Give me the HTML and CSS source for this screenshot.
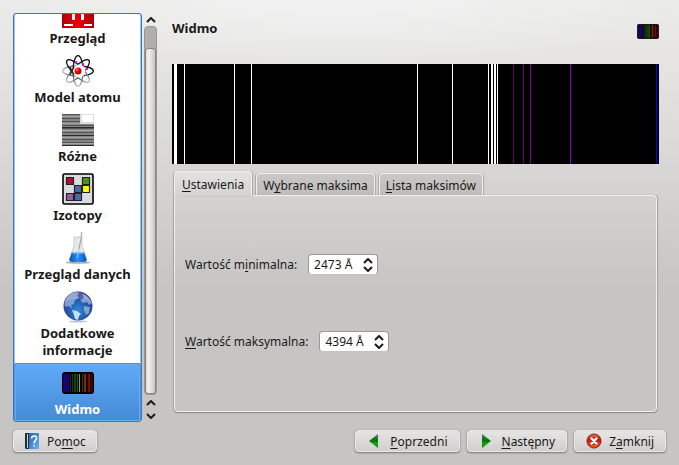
FILE: index.html
```html
<!DOCTYPE html>
<html lang="pl">
<head>
<meta charset="utf-8">
<title>Widmo</title>
<link rel="stylesheet" href="styles.css">
</head>
<body>
<svg class="defs" aria-hidden="true">
  <defs>
    <linearGradient id="red" x1="0" y1="0" x2="1" y2="0"><stop offset="0" stop-color="#a80008"/><stop offset=".45" stop-color="#f00008"/><stop offset="1" stop-color="#a80008"/></linearGradient>
    <radialGradient id="ball" cx=".35" cy=".3" r=".7"><stop offset="0" stop-color="#ff9a9a"/><stop offset=".4" stop-color="#f00"/><stop offset="1" stop-color="#b00000"/></radialGradient>
    <linearGradient id="orbit" x1="0" y1="0" x2="1" y2="0"><stop offset="0" stop-color="#bbb"/><stop offset=".5" stop-color="#333"/><stop offset="1" stop-color="#000"/></linearGradient>
    <linearGradient id="liquid" x1="0" y1="0" x2="1" y2="0"><stop offset="0" stop-color="#0d4fb0"/><stop offset=".5" stop-color="#2f93f5"/><stop offset="1" stop-color="#0b50b8"/></linearGradient>
    <radialGradient id="sea" cx=".5" cy=".65" r=".6"><stop offset="0" stop-color="#2f8ad8"/><stop offset=".6" stop-color="#2458a8"/><stop offset="1" stop-color="#35308c"/></radialGradient>
    <linearGradient id="green" x1="0" y1="0" x2="0" y2="1"><stop offset="0" stop-color="#3c8a48"/><stop offset=".5" stop-color="#087010"/><stop offset=".7" stop-color="#0cae10"/><stop offset="1" stop-color="#0a7a10"/></linearGradient>
    <linearGradient id="book" x1="0" y1="0" x2="1" y2="1"><stop offset="0" stop-color="#2464b4"/><stop offset="1" stop-color="#6db0ee"/></linearGradient>
    <linearGradient id="stop" x1="0" y1="0" x2="0" y2="1"><stop offset="0" stop-color="#d88070"/><stop offset=".4" stop-color="#b81808"/><stop offset="1" stop-color="#f06030"/></linearGradient>
    <symbol id="spectrum-icon" viewBox="0 0 32 22">
      <rect x=".5" y=".5" width="31" height="21" rx="2" fill="#080004" stroke="#000"/>
      <path fill="#1c0078" d="M2 2h5v18H2z"/><path fill="#22004c" d="M1 2h1v18H1z"/><path fill="#06283c" d="M8 2h1v18H8z"/><path fill="#084020" d="M10 2h1v18h-1z"/><path fill="#0c4c08" d="M12 2h2v18h-2z"/><path fill="#1c5c00" d="M15 2h1v18h-1z"/><path fill="#8ca800" d="M17 2h1v18h-1z"/><path fill="#403800" d="M20 2h1v18h-1z"/><path fill="#6c3410" d="M22 2h2v18h-2z"/><path fill="#900000" d="M26 2h2v18h-2z"/><path fill="#400000" d="M29 2h2v18h-2z"/>
    </symbol>
  </defs>
</svg>
<div class="workspace">
  <div class="side">
    <nav class="pages">
      <a class="page" href="#overview">
        <svg class="icon" viewBox="0 0 32 32"><path fill="url(#red)" d="M0 0h32v32H0z"/><path fill="#fff" d="M10 13h3v11h-3zM19 13h3v11h-3zM2 28h9v2H2zM22 28h8v2h-8z"/></svg>
        <span>Przegląd</span></a>
      <a class="page" href="#atom">
        <svg class="icon" viewBox="0 0 32 32"><g fill="none" stroke="url(#orbit)" stroke-width="1.3"><ellipse cx="16" cy="16" rx="15.300" ry="5"/><ellipse cx="16" cy="16" rx="15.300" ry="5" transform="rotate(-45 16 16)"/><ellipse cx="16" cy="16" rx="15.300" ry="5" transform="rotate(-90 16 16)"/><ellipse cx="16" cy="16" rx="15.300" ry="5" transform="rotate(-135 16 16)"/></g><circle cx="17" cy="16" r="6.500" fill="#fff"/><path fill="#f0f" d="M13 6h2v2h-2zM20 8h2v2h-2zM24 13h2v2h-2zM23 20h2v1h-2z"/><circle cx="16" cy="16" r="3.5" fill="url(#ball)"/><path d="M8 12l4 8M8 20l4-8" stroke="#222" stroke-width="1.300"/></svg>
        <span>Model atomu</span></a>
      <a class="page" href="#misc">
        <svg class="icon" viewBox="0 0 32 32" shape-rendering="crispEdges"><path fill="#858585" d="M0 0h32v32H0z"/><path stroke="#555" d="M0 .5h32M0 4.5h32M0 7.5h32M0 11.5h32M0 14.5h32M0 18.5h32M0 25.5h32M0 28.5h32"/><path stroke="#2c2c2c" d="M0 21.5h32M0 31.5h32M0 13.5h32"/><path stroke="#a5a5a5" d="M0 2.5h32M0 9.5h32M0 16.5h32M0 23.5h32M0 29.5h32"/><path fill="#ddd" d="M18 0h14v10H18z"/><path fill="#fff" d="M20 1h11v7H20z"/></svg>
        <span>Różne</span></a>
      <a class="page" href="#isotopes">
        <svg class="icon" viewBox="0 0 32 32"><rect x="1" y="1" width="30" height="30" rx="1.5" fill="#d8dcde" stroke="#000" stroke-width="1.6"/><g stroke="#222" stroke-width="1.2"><path fill="#b80c38" d="M4.500 4.500h7v7h-7z"/><path fill="#4c9414" d="M20.500 4.500h7v7h-7z"/><path fill="#4868b0" d="M12.500 12.500h7v7h-7zM12.500 20.500h7v7h-7z"/><path fill="#ff0" d="M20.500 12.500h7v7h-7z"/><path fill="#a058a0" d="M4.500 20.500h7v7h-7z"/></g></svg>
        <span>Izotopy</span></a>
      <a class="page" href="#data">
        <svg class="icon" viewBox="0 0 32 32"><ellipse cx="16" cy="30.500" rx="12.500" ry="1.300" fill="#777" opacity=".6"/><path fill="#e6e9e8" stroke="#b8bcbc" stroke-width=".7" d="M12 5h8v9l4.500 13c.5 2-1 3-3 3h-11c-2 0-3.500-1-3-3L12 14z"/><path fill="url(#liquid)" d="M10 20h12l2.500 7c.5 2-1 3-3 3h-11c-2 0-3.500-1-3-3z"/><path fill="#8cc6fa" d="M10.500 20h11l.5 1.500H10z"/><path stroke="#a8acac" stroke-width="1.300" fill="none" d="M19.500 0v4L17 17"/><path stroke="#93c7fa" fill="none" d="M17 17l-2 9"/></svg>
        <span>Przegląd danych</span></a>
      <a class="page wrapped" href="#more">
        <svg class="icon" viewBox="0 0 32 32"><ellipse cx="16" cy="30.500" rx="9" ry="1" fill="#b8c4dc"/><circle cx="16" cy="15" r="14.500" fill="url(#sea)"/><path fill="#b4d4ee" opacity=".6" d="M4 8c2-4 6-7 10-7l3 1-2 3 2 2-4 2-1 4-3 1 1 3-4-2-3 1c-1-3-.5-6 1-8zM20 3c5 1 8 5 10 9l-3 2-2-3-4 1-3-3 4-2zM22 15l6 1-1 6-3 2-2-5z"/><path fill="#d4ecfc" opacity=".9" d="M10 19l5 1 4 3-2 2-1 4-3-1-1-4z"/><path fill="#fff" opacity=".18" d="M3 11C5 4 10 1 16 1s11 4 13 10c-9-5-17-4-26 0z"/></svg>
        <span>Dodatkowe informacje</span></a>
      <a class="page current" href="#spectrum" aria-current="page">
        <svg class="icon"><use href="#spectrum-icon" y="5" width="32" height="22"/></svg>
        <span>Widmo</span></a>
    </nav>
    <div class="scrollbar">
      <button class="step" aria-label="W górę"><svg viewBox="0 0 10 6"><path d="M1 5l4-4 4 4"/></svg></button>
      <div class="track"><div class="thumb"></div></div>
      <button class="step" aria-label="W górę"><svg viewBox="0 0 10 6"><path d="M1 5l4-4 4 4"/></svg></button>
      <button class="step" aria-label="W dół"><svg viewBox="0 0 10 6"><path d="M1 1l4 4 4-4"/></svg></button>
    </div>
  </div>
  <main class="content">
    <header class="heading"><h1>Widmo</h1><svg class="badge"><use href="#spectrum-icon" width="22" height="15"/></svg></header>
    <svg class="spectrum" viewBox="0 0 487 100" preserveAspectRatio="none" shape-rendering="crispEdges" role="img" aria-label="Widmo">
      <path d="M0 0h487v100H0z"/>
      <path fill="#fff" d="M2 0h3v100H2zM12 0h1v100h-1zM62 0h1v100h-1zM79 0h1v100h-1zM245 0h1v100h-1zM280 0h1v100h-1zM316 0h1v100h-1zM319 0h2v100h-2zM322 0h2v100h-2zM325 0h1v100h-1z"/>
      <path fill="#5c0064" d="M341 0h1v100h-1z"/><path fill="#680078" d="M351 0h1v100h-1z"/><path fill="#780090" d="M358 0h1v100h-1z"/><path fill="#8400c8" d="M398 0h1v100h-1z"/><path fill="#00f" d="M484 0h1v100h-1z"/>
    </svg>
    <div class="tabs" role="tablist">
      <button class="tab active" role="tab" aria-selected="true"><u>U</u>stawienia</button>
      <button class="tab" role="tab" aria-selected="false">W<u>y</u>brane maksima</button>
      <button class="tab" role="tab" aria-selected="false"><u>L</u>ista maksimów</button>
    </div>
    <section class="panel" role="tabpanel">
      <div class="field"><label for="min">Wartość m<u>i</u>nimalna:</label>
        <div class="spin"><input id="min" type="text" value="2473 Å"><div class="arrows"><button aria-label="Więcej"><svg viewBox="0 0 10 6"><path d="M1 5l4-4 4 4"/></svg></button><button aria-label="Mniej"><svg viewBox="0 0 10 6"><path d="M1 1l4 4 4-4"/></svg></button></div></div></div>
      <div class="field"><label for="max"><u>W</u>artość maksymalna:</label>
        <div class="spin"><input id="max" type="text" value="4394 Å"><div class="arrows"><button aria-label="Więcej"><svg viewBox="0 0 10 6"><path d="M1 5l4-4 4 4"/></svg></button><button aria-label="Mniej"><svg viewBox="0 0 10 6"><path d="M1 1l4 4 4-4"/></svg></button></div></div></div>
    </section>
  </main>
</div>
<footer class="actions">
  <button class="button help"><svg viewBox="0 0 16 16"><path fill="#222c38" d="M1 0h4v16H2L1 15z"/><path fill="#c8d4e0" d="M3 1h1v14H3z"/><path fill="url(#book)" d="M5 0h10v16H5z"/><path fill="none" stroke="#fff" stroke-width="1.500" d="M7.500 5.500C7.500 2 13 2 12.500 5.500 12 7.500 10 8 10 10.500M10 12v1.500"/></svg><span>Po<u>m</u>oc</span></button>
  <button class="button"><svg viewBox="0 0 16 16"><path fill="url(#green)" d="M11 1v14L2 8z"/></svg><span><u>P</u>oprzedni</span></button>
  <button class="button"><svg viewBox="0 0 16 16"><path fill="url(#green)" d="M3 1v14l9-7z"/></svg><span><u>N</u>astępny</span></button>
  <button class="button"><svg viewBox="0 0 16 16"><circle cx="8" cy="8" r="7" fill="url(#stop)" stroke="#a01408"/><path stroke="#fff" stroke-width="2.400" stroke-linecap="round" d="M5.500 5.500l5 5M10.500 5.500l-5 5"/></svg><span>Z<u>a</u>mknij</span></button>
</footer>
</body>
</html>
```
FILE: styles.css
```css
* { box-sizing: border-box; }
body {
  margin: 0;
  height: 100vh;
  padding: 13px 12px;
  display: flex;
  flex-direction: column;
  gap: 8px;
  overflow: hidden;
  font: 12px/17px "Noto Sans", "Open Sans", sans-serif;
  color: #1b1918;
  background:
    radial-gradient(ellipse 340px 64px at 50% 0, #f2f2f2, rgba(242, 242, 242, 0)),
    linear-gradient(#ebebea, #e2e1e0 90px, #c6c5c3 290px);
}
button, input { font: inherit; color: inherit; }
button { padding: 0; border: 0; background: none; }
u { text-underline-offset: 2px; text-decoration-thickness: 1px; text-decoration-skip-ink: none; }
.defs { position: absolute; width: 0; height: 0; }

.workspace { flex: 1; min-height: 0; display: flex; gap: 14px; }
.side { display: flex; gap: 1px; }
.pages {
  width: 129px;
  margin-left: 1px;
  display: flex;
  flex-direction: column;
  justify-content: flex-end;
  overflow: hidden;
  background: #fff;
  border: 1px solid #3a78c4;
  border-radius: 3px;
  box-shadow: inset 1px 0 #9cc4ee, inset -1px 0 #9cc4ee;
}
.page {
  flex: none;
  display: flex;
  flex-direction: column;
  align-items: center;
  gap: 2px;
  padding: 4px;
  color: inherit;
  font-size: 13px;
  font-weight: bold;
  text-align: center;
  text-decoration: none;
}
.wrapped { padding: 4px 16px; }
.icon { width: 32px; height: 32px; }
.current {
  margin-bottom: -1px;
  color: #fff;
  background: linear-gradient(#60acfa, #4489d3);
  border-radius: 3px;
  box-shadow: inset 0 0 0 1px #4b91dc, inset 0 0 0 2px #67acf2;
}
.scrollbar { width: 15px; display: flex; flex-direction: column; align-items: center; }
.step { height: 13px; display: flex; align-items: center; }
.step svg { width: 10px; height: 6px; }
.step path, .arrows path { fill: none; stroke: #1c1c1c; stroke-width: 2; }
.track {
  flex: 1;
  width: 13px;
  margin-bottom: 1px;
  padding-top: 21px;
  display: flex;
  border-radius: 4px;
  background: #b0afae;
  border: 1px solid #989796;
}
.thumb {
  flex: 1;
  border: 1px solid #858483;
  border-radius: 3px;
  background: linear-gradient(90deg, #ddd, #f0f0ef 30%, #c8c7c6);
}

.content { flex: 1; min-width: 0; padding: 7px 8px 10px 0; display: flex; flex-direction: column; }
.heading { height: 44px; display: flex; justify-content: space-between; }
.heading h1 { margin: 0; font-size: 13px; line-height: 17px; }
.badge { width: 22px; height: 15px; margin-top: 4px; }
.spectrum { width: 100%; height: 100px; flex: none; }
.tabs { display: flex; align-items: flex-end; gap: 4px; margin: 7px 2px 0; }
.tab {
  height: 22px;
  padding: 2px 6px 0;
  border: 1px solid #f0efee;
  border-bottom: 0;
  border-radius: 4px 4px 0 0;
  background: linear-gradient(#c9c8c7, #bebdbb);
  box-shadow: 1px 0 1px #aaa9a8, -1px 0 1px #aaa9a8;
}
.tab.active { position: relative; z-index: 1; height: 25px; margin-bottom: -1px; padding: 0 7px; background: linear-gradient(#e4e3e2, #d3d2d0); }
.panel {
  flex: 1;
  margin: 0 2px;
  padding: 58px 10px;
  display: flex;
  flex-direction: column;
  gap: 56px;
  border: 1px solid #f2f1f0;
  border-radius: 4px;
  box-shadow: 0 1px 1px #858483, 1px 0 1px #a5a4a3, -1px 0 1px #a5a4a3;
}
.field { display: flex; align-items: center; gap: 11px; }
.spin {
  width: 70px;
  height: 21px;
  padding: 0 4px 0 5px;
  display: flex;
  align-items: center;
  border: 1px solid #9a9998;
  border-bottom-color: #c4c3c2;
  border-radius: 4px;
  background: #fff;
}
.spin input { flex: 1; min-width: 0; padding: 0; border: 0; background: none; outline: 0; }
.arrows { display: flex; flex-direction: column; gap: 2px; }
.arrows button { display: flex; }
.arrows svg { width: 10px; height: 6px; }

.actions { display: flex; gap: 7px; padding: 0 1px; }
.button {
  height: 22px;
  padding: 0 11px;
  display: flex;
  align-items: center;
  gap: 7px;
  border: 1px solid #e9e8e7;
  border-radius: 4px;
  background: linear-gradient(#e6e5e4, #d0cfcd);
  box-shadow: 0 1px 2px #777675, 0 0 1px #8c8b8a;
}
.button svg { width: 16px; height: 16px; }
.help { margin-right: auto; padding: 0 10px; }
```
